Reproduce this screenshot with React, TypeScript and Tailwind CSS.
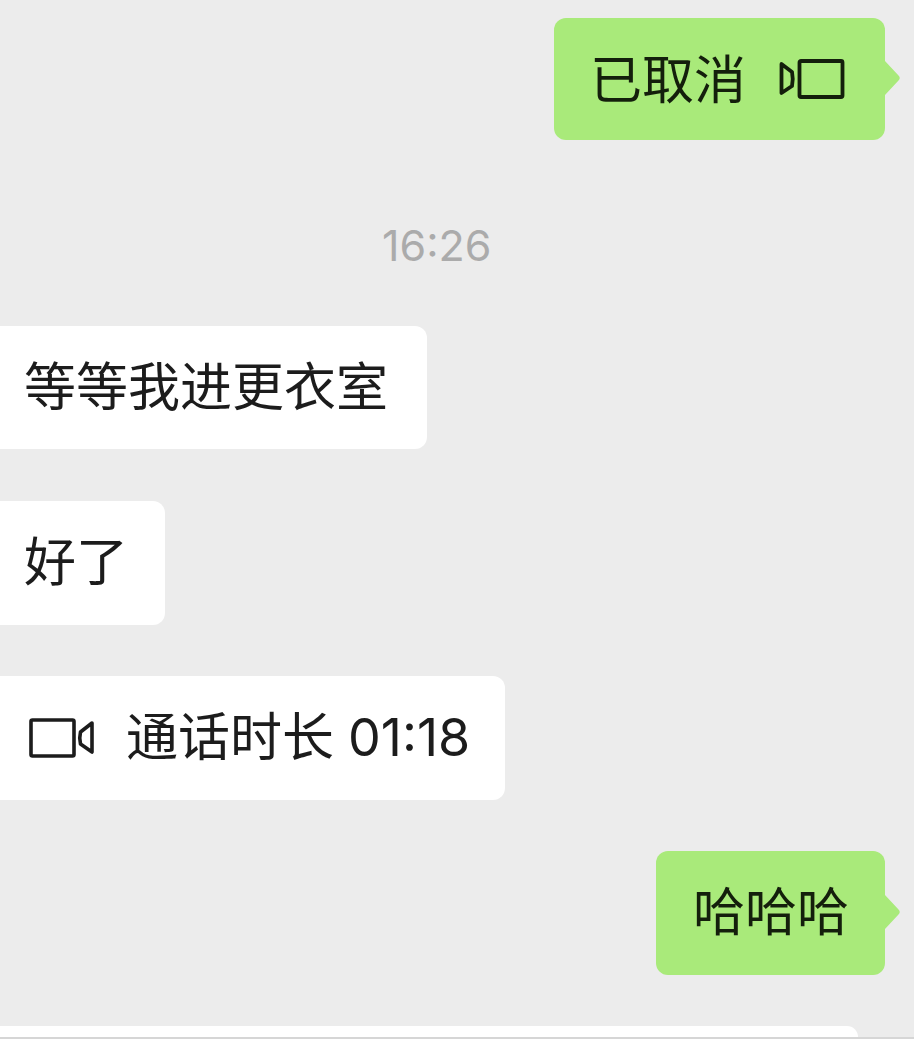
import type { ReactNode } from "react";

const font = "font-['Inter','Noto_Sans_CJK_SC',sans-serif]";

function SentBubble({ children, className }: { children: ReactNode; className: string }) {
  return (
    <div className={`relative ml-auto mr-[29px] flex items-center rounded-[12px] bg-[#a9ea7a] text-[#141f0c] ${className}`}>
      {children}
      <svg className="absolute left-full top-1/2 -mt-[18px]" width="16" height="34" viewBox="0 0 16 34">
        <path d="M0 0 L13.5 14.5 Q16 17 13.5 19.5 L0 34 Z" fill="#a9ea7a" />
      </svg>
    </div>
  );
}

function ReceivedBubble({ children, className }: { children: ReactNode; className: string }) {
  return (
    <div className={`flex items-center rounded-r-[12px] bg-white text-[#1c1c1c] ${className}`}>
      {children}
    </div>
  );
}

export default function App() {
  return (
    <div className={`relative flex h-[1039px] w-[914px] flex-col overflow-hidden bg-[#ececec] pt-[18px] text-[52px] leading-none ${font}`}>
      <SentBubble className="h-[122px] w-[331px] pl-[36px] pt-[3px]">
        <span>已取消</span>
        <svg className="ml-[33px] -mt-[3px]" width="66" height="42" viewBox="0 0 66 42" fill="none" stroke="#141f0c" strokeWidth="3.8" strokeLinejoin="round">
          <path d="M2.5 6 L13 14 Q14.5 21 13 28 L2.5 35 Z" />
          <rect x="20.5" y="3" width="43" height="36" rx="1.5" />
        </svg>
      </SentBubble>

      <div className="mt-[80px] pl-[382px] text-[43px] leading-[50px] text-[#ababab]">16:26</div>

      <ReceivedBubble className="mt-[56px] h-[123px] w-[427px] pl-[24px]">
        <span>等等我进更衣室</span>
      </ReceivedBubble>
      <ReceivedBubble className="mt-[52px] h-[124px] w-[165px] pl-[24px]">
        <span>好了</span>
      </ReceivedBubble>
      <ReceivedBubble className="mt-[51px] h-[124px] w-[505px] pl-[29px]">
        <svg width="66" height="42" viewBox="0 0 66 42" fill="none" stroke="#1c1c1c" strokeWidth="3.6" strokeLinejoin="round">
          <rect x="2" y="3" width="43" height="36" rx="1.5" />
          <path d="M63 6 L51.5 15 Q50 21 51.5 27 L63 35 Z" />
        </svg>
        <span className="ml-[31px] whitespace-nowrap">通话时长</span>
        <span className="ml-[14px] text-[52px]">01:18</span>
      </ReceivedBubble>

      <SentBubble className="mt-[51px] h-[124px] w-[229px] pl-[37px]">
        <span>哈哈哈</span>
      </SentBubble>

      <div className="mt-[51px] h-[11px] w-[858px] shrink-0 rounded-tr-[12px] bg-white" />
      <div className="absolute inset-x-0 bottom-0 h-[2px] bg-[#d6d6d6]" />
    </div>
  );
}
